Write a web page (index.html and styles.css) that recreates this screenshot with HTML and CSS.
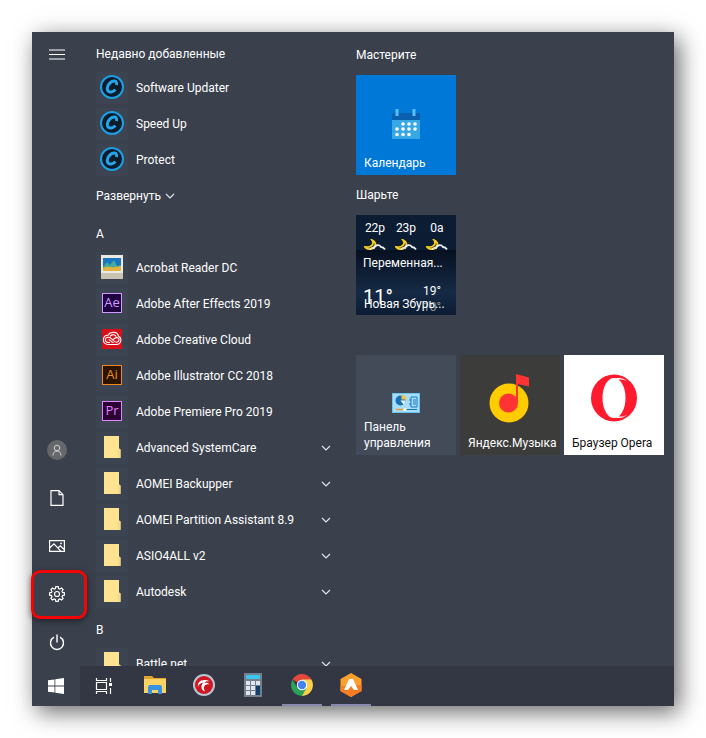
FILE: index.html
```html
<!DOCTYPE html>
<html lang="ru">
<head>
    <meta charset="UTF-8">
    <meta name="viewport" content="width=device-width, initial-scale=1.0">
    <title>Пуск</title>
    <link rel="stylesheet" href="styles.css">
</head>
<body>
    <!-- Shared icons -->
    <svg class="sprite" aria-hidden="true">
        <symbol id="chevron" viewBox="0 0 10 6">
            <path d="M1 1l4 4 4-4" fill="none" stroke="#dfe3ea" stroke-width="1.2"/>
        </symbol>
        <symbol id="iobit" viewBox="0 0 24 24">
            <circle cx="12" cy="12" r="11" fill="#0e1b29" stroke="#1c9fe6" stroke-width="2"/>
            <path d="M16.400 10c.8-2.800-.6-4.200-2.800-3.900-3.300.5-6.200 4-6.300 7.300 0 2.700 1.700 4 4 3.600 1.700-.3 3.100-1.100 4-2.600" fill="none" stroke="#22a6ec" stroke-width="3"/>
        </symbol>
        <symbol id="folder" viewBox="0 0 18 22">
            <path d="M1 0h15v12l1.500 2v8H1z" fill="#ffe391"/>
            <path d="M15 13h2.500v9H15z" fill="#f5d98a"/>
        </symbol>
        <symbol id="moon" viewBox="0 0 22 11">
            <path d="M8 1c3 4-1 8-7 7 2 3 8 3 10-1 1-2 0-5-3-6z" fill="#3a2c08" stroke="#f5cf1c" stroke-width="1.800"/>
            <path d="M6 10.500c1-1.500 3-2 4-1.500 1-3 5-4 7-1 2 0 3 1 4 2.500" fill="none" stroke="#e8edf5" stroke-width="1.800"/>
        </symbol>
    </svg>

    <div class="desktop">
        <div class="start-menu">
            <nav class="rail">
                <button class="rail-button menu-button" aria-label="Меню">
                    <svg width="16" height="11" viewBox="0 0 16 11"><path d="M0 1h16M0 5.500h16M0 10h16" stroke="#fff" stroke-width="1.200"/></svg>
                </button>
                <button class="rail-button" aria-label="Учетная запись">
                    <svg width="20" height="20" viewBox="0 0 20 20"><circle cx="10" cy="10" r="10" fill="#65676b"/><circle cx="10" cy="8" r="2.800" fill="none" stroke="#d0d2d5"/><path d="M6 15.500c0-6 8-6 8 0" fill="none" stroke="#d0d2d5"/></svg>
                </button>
                <button class="rail-button" aria-label="Документы">
                    <svg width="14" height="16" viewBox="0 0 14 16"><path d="M1 .7h8l4 4v10.600H1zM9 .7v4h4" fill="none" stroke="#fff" stroke-width="1.200"/></svg>
                </button>
                <button class="rail-button" aria-label="Изображения">
                    <svg width="16" height="12" viewBox="0 0 16 12"><path d="M.6.6h14.800v10.800H.6zM.6 8l4.400-4.200 6.500 7M9 8l2.300-2.200 4.100 4" fill="none" stroke="#fff" stroke-width="1.200"/><circle cx="12" cy="3.400" r=".9" fill="#fff"/></svg>
                </button>
                <button class="rail-button highlighted" aria-label="Параметры">
                    <svg width="16" height="16" viewBox="0 0 16 16"><path d="M6.800.7h2.400l.4 1.900 1.200.5 1.700-1.100 1.600 1.600L13 5.300l.5 1.100 1.900.4v2.400l-1.900.4-.5 1.100 1.100 1.700-1.600 1.600-1.700-1.100-1.200.5-.4 1.900H6.800l-.4-1.900-1.200-.5L3.500 14l-1.600-1.600L3 10.700l-.5-1.100-1.900-.4V6.800l1.900-.4.5-1.100-1.100-1.700L3.500 2l1.700 1.100 1.200-.5z" fill="none" stroke="#fff" stroke-width="1.200"/><circle cx="8" cy="8" r="2.500" fill="none" stroke="#fff" stroke-width="1.200"/></svg>
                </button>
                <button class="rail-button" aria-label="Выключение">
                    <svg width="16" height="17" viewBox="0 0 16 17"><path d="M5 3.200a6.500 6.500 0 1 0 6 0M8 .5v8" fill="none" stroke="#fff" stroke-width="1.400"/></svg>
                </button>
            </nav>

            <div class="apps">
                <h2 class="letter">Недавно добавленные</h2>
                <button class="app"><span class="app-icon"><svg width="24" height="24"><use href="#iobit"/></svg></span>Software Updater</button>
                <button class="app"><span class="app-icon"><svg width="24" height="24"><use href="#iobit"/></svg></span>Speed Up</button>
                <button class="app"><span class="app-icon"><svg width="24" height="24"><use href="#iobit"/></svg></span>Protect</button>
                <button class="app expand">Развернуть<svg width="10" height="6"><use href="#chevron"/></svg></button>

                <h2 class="letter">A</h2>
                <button class="app">
                    <span class="app-icon"><svg width="22" height="24" viewBox="0 0 22 24"><path d="M0 0h22v24H0z" fill="#eceae2"/><path d="M0 18h22v6H0z" fill="#c9c3b4"/><path d="M2 3h18v13H2z" fill="#1a75c0"/><path d="M2 12l4-5 3 3 4-5 3 6 4-1v6H2z" fill="#44aa9c"/><path d="M2 13c5-3 9 0 12-1l6-1v5H2z" fill="#e1b23d"/></svg></span>Acrobat Reader DC
                </button>
                <button class="app"><span class="app-icon"><span class="adobe after-effects">Ae</span></span>Adobe After Effects 2019</button>
                <button class="app">
                    <span class="app-icon"><svg width="20" height="20" viewBox="0 0 20 20"><path d="M0 0h20v20H0z" fill="#d9101a"/><g fill="none" stroke="#fff" stroke-width="1.100"><path d="M5.500 15.500C-.5 14.500.5 6 6 6.300 9 1.500 16 3 16.300 7c4.200 2 3 8.500-1.800 8.500z"/><path d="M8 13.300c-6 1.500-6-6-1-5 3 .3 4.500 5 7 5 4 0 4-5 .5-4.700-2 .2-2.500 1.200-3.300 2"/><path d="M6.500 10.800c1.500-1 2.800 3 5 3M8 7.500c2-3 6-2 6.300.8"/></g></svg></span>Adobe Creative Cloud
                </button>
                <button class="app"><span class="app-icon"><span class="adobe illustrator">Ai</span></span>Adobe Illustrator CC 2018</button>
                <button class="app"><span class="app-icon"><span class="adobe premiere">Pr</span></span>Adobe Premiere Pro 2019</button>
                <button class="app"><span class="app-icon"><svg width="18" height="22"><use href="#folder"/></svg></span>Advanced SystemCare<svg class="arrow" width="10" height="6"><use href="#chevron"/></svg></button>
                <button class="app"><span class="app-icon"><svg width="18" height="22"><use href="#folder"/></svg></span>AOMEI Backupper<svg class="arrow" width="10" height="6"><use href="#chevron"/></svg></button>
                <button class="app"><span class="app-icon"><svg width="18" height="22"><use href="#folder"/></svg></span>AOMEI Partition Assistant 8.9<svg class="arrow" width="10" height="6"><use href="#chevron"/></svg></button>
                <button class="app"><span class="app-icon"><svg width="18" height="22"><use href="#folder"/></svg></span>ASIO4ALL v2<svg class="arrow" width="10" height="6"><use href="#chevron"/></svg></button>
                <button class="app"><span class="app-icon"><svg width="18" height="22"><use href="#folder"/></svg></span>Autodesk<svg class="arrow" width="10" height="6"><use href="#chevron"/></svg></button>

                <h2 class="letter">B</h2>
                <button class="app"><span class="app-icon"><svg width="18" height="22"><use href="#folder"/></svg></span>Battle.net<svg class="arrow" width="10" height="6"><use href="#chevron"/></svg></button>
            </div>

            <div class="tiles">
                <h2 class="group-title">Мастерите</h2>
                <div class="tile-row">
                    <button class="tile calendar">
                        <svg width="32" height="34" viewBox="0 0 32 34">
                            <path d="M2 5h28v8H2z" fill="#0a5fae"/><path d="M2 12h28v19H2z" fill="#37a8e4"/>
                            <path d="M5.500 1h3v7h-3zM22.500 1h3v7h-3z" fill="#58bdf0"/>
                            <g fill="#fff"><circle cx="13" cy="16" r="1.800"/><circle cx="19" cy="16" r="1.800"/><circle cx="25" cy="16" r="1.800"/><circle cx="7" cy="21" r="1.800"/><circle cx="13" cy="21" r="1.800"/><circle cx="19" cy="21" r="1.800"/><circle cx="25" cy="21" r="1.800"/><circle cx="7" cy="26.500" r="1.800"/><circle cx="13" cy="26.500" r="1.800"/><circle cx="19" cy="26.500" r="1.800"/></g>
                        </svg>
                        <span class="tile-label">Календарь</span>
                    </button>
                </div>

                <h2 class="group-title">Шарьте</h2>
                <div class="tile-row">
                    <button class="tile weather">
                        <span class="hours">
                            <span class="hour">22p<svg width="22" height="11"><use href="#moon"/></svg></span>
                            <span class="hour">23p<svg width="22" height="11"><use href="#moon"/></svg></span>
                            <span class="hour">0a<svg width="22" height="11"><use href="#moon"/></svg></span>
                        </span>
                        <span class="now">
                            <span class="condition">Переменная...</span>
                            <span class="temps">
                                <span class="current">11°</span>
                                <span class="range">19°<span class="low">10°</span></span>
                            </span>
                            <span class="city">Новая Збурь...</span>
                        </span>
                    </button>
                </div>

                <div class="tile-row untitled">
                    <button class="tile control-panel">
                        <svg width="28" height="20" viewBox="0 0 28 20">
                            <path d="M0 0h28v20H0z" fill="#67c3f2"/><path d="M1 1h26v18H1z" fill="#a5ddfa"/>
                            <circle cx="8.500" cy="7.500" r="5" fill="#1670b8"/><path d="M9.500 6.500V1.500a5 5 0 0 1 5 5z" fill="#f5c04a"/><path d="M8.500 7.500h5a5 5 0 0 1-2 4z" fill="#fff"/>
                            <path d="M19 4h6v10h-6zM17 7h2M17 11h2M21 7h3M21 9h3M21 11h3" fill="none" stroke="#1b77bd"/>
                            <path d="M4 16.500h7" stroke="#ef9b32" stroke-width="1.500"/><path d="M13 16.500h12" stroke="#1b77bd"/><circle cx="13" cy="16.500" r="1.500" fill="#fff"/>
                        </svg>
                        <span class="tile-label">Панель управления</span>
                    </button>
                    <button class="tile music">
                        <svg width="42" height="50" viewBox="0 0 42 50"><circle cx="20" cy="30" r="19.500" fill="#fc0"/><circle cx="19.500" cy="30" r="9.500" fill="#ff3333"/><path d="M27 1l13 3.500v9l-11-2.500v19.500h-2z" fill="#ff3333"/></svg>
                        <span class="tile-label">Яндекс.Музыка</span>
                    </button>
                    <button class="tile opera">
                        <svg width="46" height="48" viewBox="0 0 46 48">
                            <ellipse cx="23" cy="24" rx="23" ry="23.500" fill="#ff1b2d"/>
                            <ellipse cx="23" cy="24" rx="11.500" ry="20" fill="#fff"/>
                            <path d="M25 4.300c4-.8 8 0 11 3-3-1.800-6-2.300-9-1.600zM25 43.700c4 .8 8 0 11-3-3 1.800-6 2.300-9 1.600z" fill="#fff"/>
                        </svg>
                        <span class="tile-label">Браузер Opera</span>
                    </button>
                </div>
            </div>
        </div>

        <div class="taskbar">
            <button class="system-button start" aria-label="Пуск">
                <svg width="16" height="16" viewBox="0 0 16 16"><path d="M0 2.300l6.500-.9v6.200H0zM7.300 1.300L16 0v7.600H7.300zM0 8.400h6.500v6.200L0 13.700zM7.300 8.400H16V16l-8.700-1.300z" fill="#fff"/></svg>
            </button>
            <button class="system-button" aria-label="Представление задач">
                <svg width="18" height="16" viewBox="0 0 18 16"><path d="M1.500 0v2.500h10V0M1.500 16v-2.500h10V16M1.500 4.500h10v7h-10zM15.500 0v4M15.500 10v6" fill="none" stroke="#fff" stroke-width="1.200"/><path d="M14 5h3v3h-3z" fill="#fff"/></svg>
            </button>
            <div class="pinned">
                <button class="task" aria-label="Проводник">
                    <svg width="22" height="20" viewBox="0 0 22 20"><path d="M0 1h8l2 2h12v15H0z" fill="#e3a22b"/><path d="M0 4h22v14H0z" fill="#fbd364"/><path d="M4 19v-7q0-2 2-2h10q2 0 2 2v7h-4v-4H8v4z" fill="#3793df"/></svg>
                </button>
                <button class="task" aria-label="IObit">
                    <svg width="24" height="24" viewBox="0 0 24 24"><circle cx="12" cy="12" r="11" fill="#b9c6cf"/><circle cx="12" cy="12" r="9" fill="#cf1522"/><path d="M6 14c-1-6 5-9 12-5.500-3-.5-5 .2-5.500 1.500 2-.5 4 0 5 1.500-3-.8-5 .5-5.500 2.500-.3 1.500 0 3 1.500 4.500-3-.5-4.500-2.500-4-5.500.2-1.500 1-2.500 2-3.500-3 .5-5 2-5.500 4.500z" fill="#fff"/></svg>
                </button>
                <button class="task" aria-label="Калькулятор">
                    <svg width="18" height="24" viewBox="0 0 18 24"><path d="M0 0h18v24H0z" fill="#71808c"/><path d="M2 2h14v4H2z" fill="#3cc4ed"/><path d="M2 8h4v4H2zM7 8h4v4H7zM12 8h4v4h-4zM2 13h4v4H2zM7 13h4v4H7zM2 18h4v4H2zM7 18h4v4H7z" fill="#e0e5eb"/><path d="M12 13h4v9h-4z" fill="#123d6b"/></svg>
                </button>
                <button class="task running" aria-label="Google Chrome">
                    <svg width="22" height="22" viewBox="0 0 22 22"><path d="M11 11L1.500 5.500a11 11 0 0 1 19 0z" fill="#e2483d"/><path d="M11 11V5.500h9.500A11 11 0 0 1 11 22z" fill="#fdd148"/><path d="M11 11l4.500 3L11 22A11 11 0 0 1 1.500 5.500l4.700 8z" fill="#29a158"/><circle cx="11" cy="11" r="5.200" fill="#fff"/><circle cx="11" cy="11" r="4.200" fill="#4384ee"/></svg>
                </button>
                <button class="task running" aria-label="AIDA">
                    <svg width="22" height="24" viewBox="0 0 22 24"><path d="M11 0l10.500 6v12L11 24 .5 18V6z" fill="#ff9f2d"/><path d="M.5 13l21-1v6L11 24 .5 18z" fill="#fa7c22"/><path d="M9 6h4l5 11h-4l-3-4-3 4H4z" fill="#fff"/></svg>
                </button>
            </div>
        </div>
    </div>
</body>
</html>
```
FILE: styles.css
```css
* {
    box-sizing: border-box;
}

body {
    margin: 0;
    padding: 32px;
    background: #fff;
    color: #fff;
    font-family: Roboto, "Noto Sans", sans-serif;
    font-size: 12px;
    line-height: 16px;
}

button {
    margin: 0;
    padding: 0;
    border: none;
    background: none;
    color: inherit;
    font: inherit;
    text-align: left;
    cursor: pointer;
}

h2 {
    margin: 0;
    font-size: 12px;
    font-weight: normal;
}

svg {
    display: block;
    flex-shrink: 0;
}

.sprite {
    position: absolute;
    width: 0;
    height: 0;
}

.desktop {
    display: flex;
    flex-direction: column;
    height: calc(100vh - 64px);
    background: #3a414d;
    box-shadow: 5px 6px 22px rgba(0, 0, 0, 0.6);
}

.start-menu {
    flex: 1;
    min-height: 0;
    display: grid;
    grid-template-columns: 50px 1fr 318px;
}

/* Left rail */
.rail {
    display: flex;
    flex-direction: column;
}

.rail-button {
    position: relative;
    display: flex;
    align-items: center;
    justify-content: center;
    height: 48px;
}

.menu-button {
    height: 44px;
    margin-bottom: auto;
}

.highlighted::after {
    content: "";
    position: absolute;
    inset: 0 -5px -1px -1px;
    border: 3px solid #f30505;
    border-radius: 9px;
    box-shadow: 0 2px 6px rgba(0, 0, 0, 0.5);
}

/* App list */
.apps {
    overflow: hidden;
    padding: 2px 20px 0 14px;
}

.letter {
    height: 36px;
    padding-top: 12px;
}

.app {
    display: flex;
    align-items: center;
    gap: 8px;
    width: 100%;
    height: 36px;
    white-space: nowrap;
}

.app:hover {
    background: #4a515e;
}

.expand {
    gap: 4px;
}

.app-icon {
    display: flex;
    align-items: center;
    justify-content: center;
    width: 32px;
    height: 32px;
    padding-bottom: 2px;
    background: #3d4451;
}

.arrow {
    margin: 0 5px 0 auto;
}

.adobe {
    width: 20px;
    height: 20px;
    border: 1px solid;
    font-family: "Open Sans", "Noto Sans", sans-serif;
    font-size: 13px;
    line-height: 17px;
    text-align: center;
}

.after-effects {
    background: #1f0040;
    color: #cf9bff;
}

.illustrator {
    background: #2a1400;
    color: #f08a1d;
}

.premiere {
    background: #2a0034;
    color: #e085ff;
}

/* Tiles */
.tiles {
    padding-top: 3px;
}

.group-title {
    height: 40px;
    padding-top: 12px;
}

.tile-row {
    display: flex;
    gap: 4px;
}

.untitled {
    margin-top: 40px;
}

.tile {
    position: relative;
    display: flex;
    align-items: center;
    justify-content: center;
    width: 100px;
    height: 100px;
}

.tile-label {
    position: absolute;
    left: 8px;
    right: 0;
    bottom: 4px;
}

.calendar {
    background: #0078d7;
}

.control-panel {
    background: #434b59;
}

.music {
    background: #3c3c3b;
}

.opera {
    background: #fff;
    color: #111;
}

.control-panel svg {
    margin-top: -4px;
}

.music svg,
.opera svg {
    margin-bottom: 14px;
}

/* Weather tile */
.weather {
    flex-direction: column;
    justify-content: flex-start;
    align-items: stretch;
    overflow: hidden;
    background: #0b1c33;
}

.hours {
    display: flex;
    justify-content: space-between;
    height: 35px;
    padding: 5px 8px 0;
}

.hour {
    display: flex;
    flex-direction: column;
    align-items: center;
    gap: 3px;
    width: 22px;
}

.now {
    position: relative;
    flex: 1;
    padding: 5px 7px;
    background: linear-gradient(#06101f, #152a45 60%, #0a1930);
}

.condition {
    display: block;
    white-space: nowrap;
}

.temps {
    display: flex;
    justify-content: space-between;
    padding: 12px 8px 0 0;
}

.current {
    font-size: 20px;
    line-height: 28px;
}

.range {
    display: flex;
    flex-direction: column;
}

.low {
    opacity: 0.5;
}

.city {
    position: absolute;
    left: 8px;
    bottom: 8px;
    white-space: nowrap;
}

/* Taskbar */
.taskbar {
    display: flex;
    height: 40px;
    background: #323743;
}

.system-button {
    display: flex;
    align-items: center;
    justify-content: center;
    width: 48px;
}

.start {
    background: #3a404c;
}

.pinned {
    display: flex;
    gap: 9px;
    padding-left: 7px;
}

.task {
    display: flex;
    align-items: center;
    justify-content: center;
    width: 40px;
    border-bottom: 2px solid transparent;
}

.running {
    border-color: #8987ab;
}
```
